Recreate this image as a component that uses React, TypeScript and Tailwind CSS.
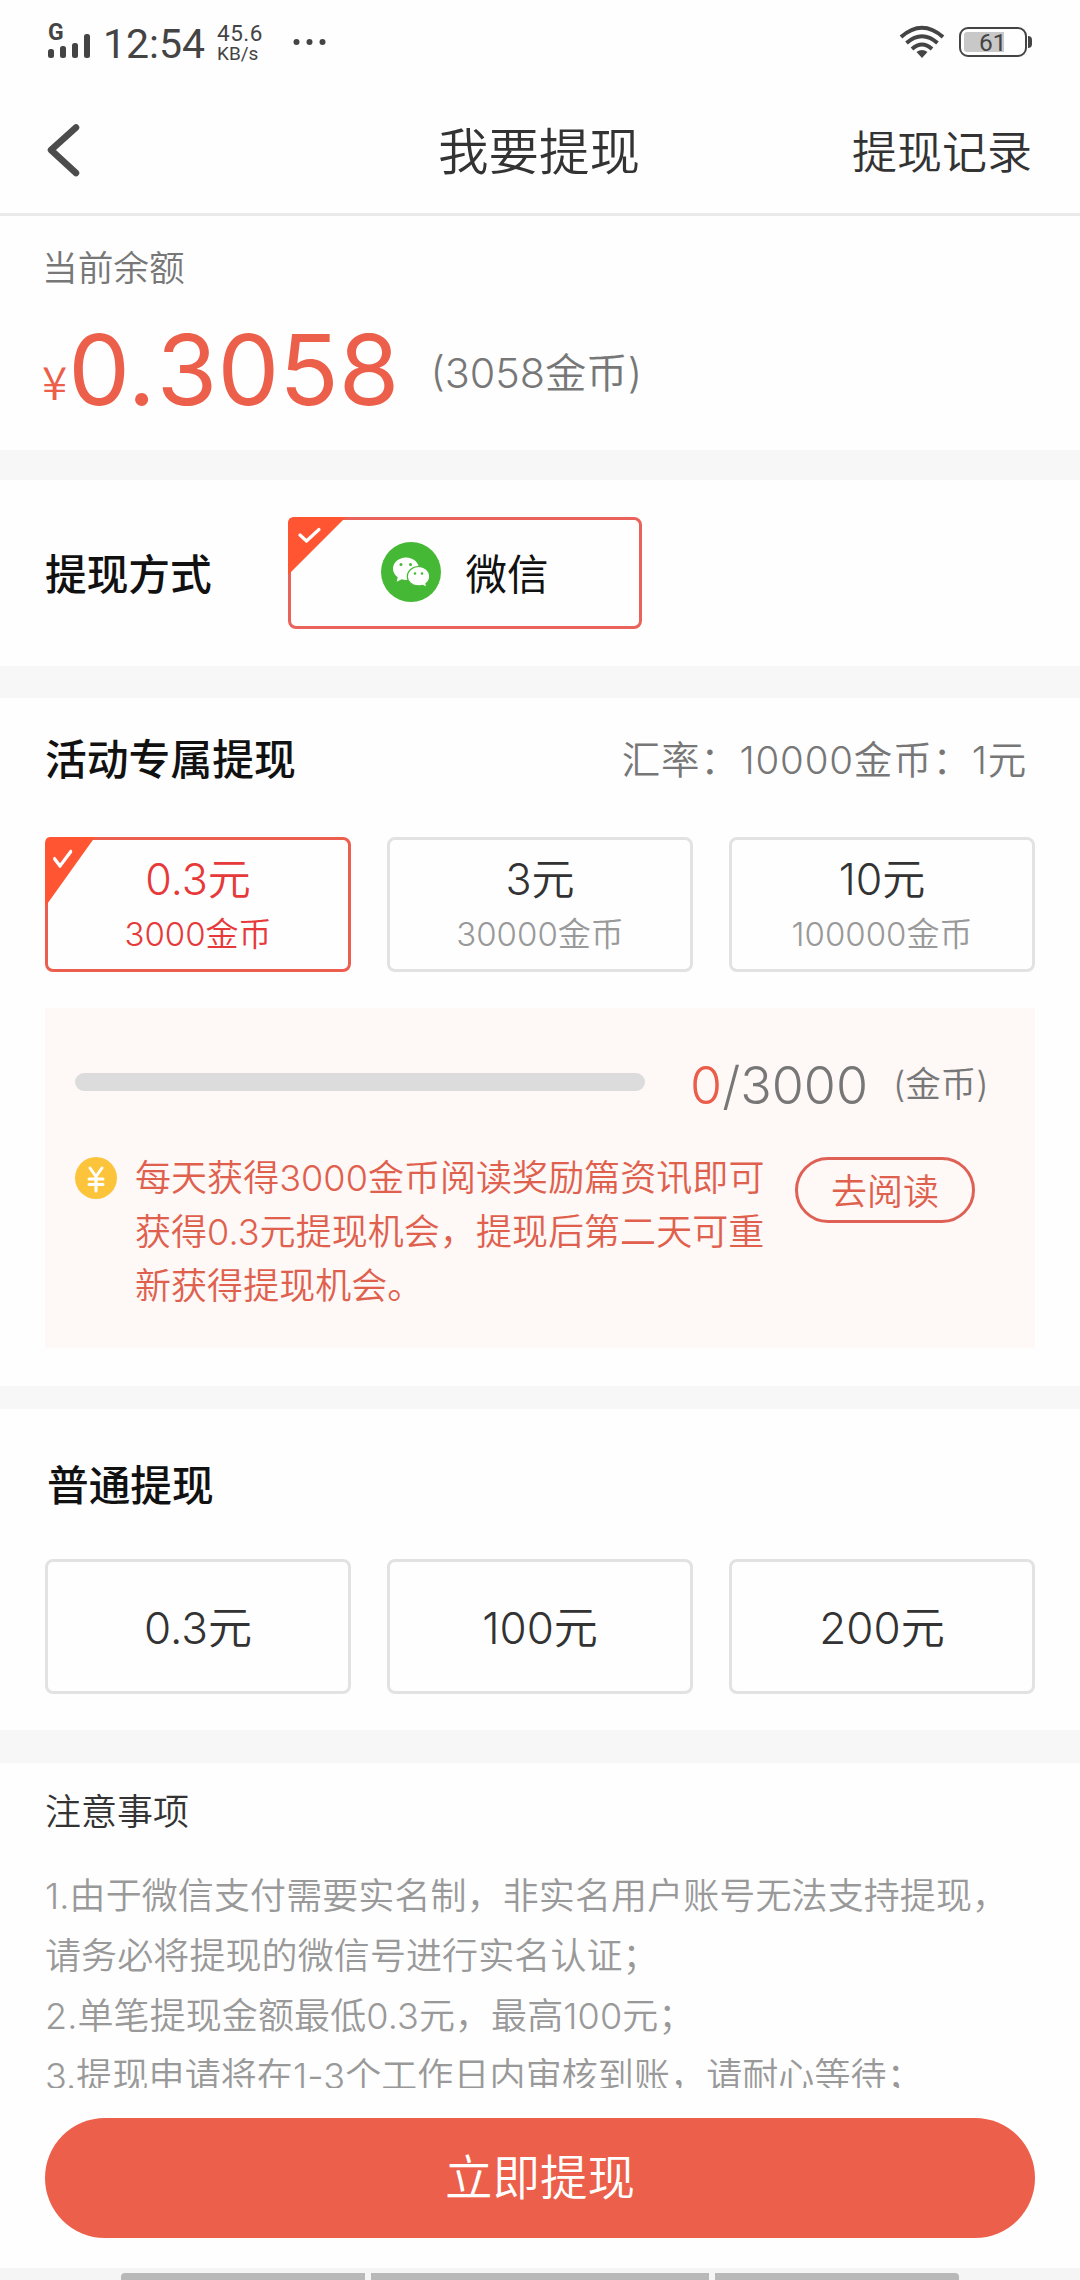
import { clsx } from "clsx";

interface Amount {
  label: string;
  coins?: string;
}

const activityAmounts: Amount[] = [
  { label: "0.3元", coins: "3000金币" },
  { label: "3元", coins: "30000金币" },
  { label: "10元", coins: "100000金币" },
];

const normalAmounts: Amount[] = [{ label: "0.3元" }, { label: "100元" }, { label: "200元" }];

const taskLines = ["每天获得3000金币阅读奖励篇资讯即可", "获得0.3元提现机会，提现后第二天可重", "新获得提现机会。"];

const notes = [
  "1.由于微信支付需要实名制，非实名用户账号无法支持提现，",
  "请务必将提现的微信号进行实名认证；",
  "2.单笔提现金额最低0.3元，最高100元；",
  "3.提现申请将在1-3个工作日内审核到账，请耐心等待；",
];

function StatusBar() {
  return (
    <div className="flex h-[84px] items-start pl-12 pr-12 text-[#444]">
      <div className="mt-[22px] flex w-[46px] flex-col">
        <span className="h-[19px] font-['Roboto'] text-[23px] leading-[21px] font-bold">G</span>
        <svg className="-mt-[8px]" width="44" height="26" viewBox="0 0 44 26" fill="currentColor">
          <rect x="0" y="16" width="6" height="9" rx="2.5" />
          <rect x="12" y="13" width="6" height="12" rx="2.5" />
          <rect x="24" y="10" width="6" height="15" rx="2.5" />
          <rect x="36" y="1" width="6" height="24" rx="2.5" />
        </svg>
      </div>
      <span className="mt-[24px] ml-[9px] w-[112px] font-['Roboto'] text-[41px] leading-[41px]">12:54</span>
      <div className="mt-[22px] ml-[2px] flex w-[74px] flex-col font-['Roboto']">
        <span className="text-[22.5px] leading-[22px] tracking-[0.5px]">45.6</span>
        <span className="text-[19px] leading-[20px]">KB/s</span>
      </div>
      <svg className="mt-[38px] ml-[2px]" width="34" height="8" viewBox="0 0 34 8" fill="currentColor">
        <circle cx="3.5" cy="4" r="3" />
        <circle cx="16.5" cy="4" r="3" />
        <circle cx="29.5" cy="4" r="3" />
      </svg>
      <svg className="mt-[25px] ml-auto" width="46" height="34" viewBox="0 0 46 34" fill="none" stroke="currentColor" strokeWidth="4">
        <path d="M2 12 Q23 -6.500 44 12" />
        <path d="M7.500 18 Q23 4.500 38.500 18" />
        <path d="M13 24 Q23 15 33 24" />
        <path d="M17.500 27 Q23 23 28.500 27 L23 33 Z" fill="currentColor" stroke="none" />
      </svg>
      <div className="mt-[27px] ml-[14px] flex items-center">
        <div className="flex h-[30px] w-[68px] items-center rounded-[9px] border-2 border-[#444] pl-[3px]">
          <div className="h-5 w-[40px] rounded-l-[3px] bg-[#c8c8c8] pl-[15px] font-['Roboto'] text-[24.5px] leading-[22px]">61</div>
        </div>
        <div className="ml-px h-3 w-[4px] rounded-r-full bg-[#444]" />
      </div>
    </div>
  );
}

function Header() {
  return (
    <div className="grid h-[132px] grid-cols-3 items-center border-b-[3px] border-[#eaeaea] pr-[48px] pl-[46px] text-[#333]">
      <svg className="mt-[2px]" width="36" height="54" viewBox="0 0 36 54" fill="none" stroke="#4c4c4c" strokeWidth="6.5" strokeLinecap="round" strokeLinejoin="round">
        <path d="M30 4.500 L5 27 L30 50" />
      </svg>
      <h1 className="mt-[6px] text-center text-[50.5px] font-[350] leading-[56px]">我要提现</h1>
      <span className="mt-[8px] text-right text-[45px] font-[350] leading-[56px]">提现记录</span>
    </div>
  );
}

function WechatIcon() {
  return (
    <svg className="mt-[-3px]" width="60" height="60" viewBox="0 0 60 60">
      <circle cx="30" cy="30" r="30" fill="#45b935" />
      <path d="M25 15.500c-7.300 0-13 5-13 11.200 0 3.500 1.900 6.500 4.700 8.500l-1 4.500 5-2.500c1.400.4 2.800.7 4.300.7 7.300 0 13-5 13-11.200s-5.700-11.200-13-11.200z" fill="#fff" />
      <path d="M37.500 24.500c6.200 0 11.200 4.400 11.200 9.900 0 3-1.500 5.500-3.800 7.300l1 3.700-4.300-2.100c-1.300.4-2.700.6-4.100.6-6.200 0-11.200-4.200-11.200-9.500s5-9.900 11.200-9.900z" fill="#fff" stroke="#45b935" strokeWidth="1.200" />
      <g fill="#45b935">
        <circle cx="20" cy="22.500" r="1.500" />
        <circle cx="29.500" cy="22.500" r="1.500" />
        <circle cx="34" cy="31.500" r="1.300" />
        <circle cx="41" cy="31.500" r="1.300" />
      </g>
    </svg>
  );
}

function CheckCorner({ tall }: { tall?: boolean }) {
  return (
    <svg
      className={clsx("absolute -top-[3px] -left-[3px]", tall ? "h-[70px] w-[50px]" : "h-[58px] w-[58px]")}
      viewBox="0 0 58 58"
      preserveAspectRatio="none"
    >
      <path d="M0 6 Q0 0 6 0 H58 L0 58 Z" fill="#ff5533" />
      <path d={tall ? "M11 18 L17.500 24 L30 12" : "M12 18 L18.500 24 L31 12.500"} fill="none" stroke="#fff" strokeWidth="3.200" strokeLinecap="round" strokeLinejoin="round" />
    </svg>
  );
}

function AmountGrid({ amounts, selected }: { amounts: Amount[]; selected?: number }) {
  return (
    <div className="grid grid-cols-3 gap-[36px]">
      {amounts.map((amount, i) => (
        <button
          key={amount.label}
          className={clsx(
            "relative flex h-[135px] flex-col items-center justify-center rounded-[8px] border-[3px] pt-[3px]",
            i === selected ? "border-[#ec5f4f] text-[#e63a3a]" : "border-[#e2e2e2] text-[#333]"
          )}
        >
          {i === selected && <CheckCorner tall />}
          <span className={clsx("font-[350] leading-[56px]", amount.coins ? "text-[43px]" : "text-[44px]")}>{amount.label}</span>
          {amount.coins && (
            <span className={clsx("text-[33px] font-[350] leading-[54px]", i !== selected && "text-[#999]")}>{amount.coins}</span>
          )}
        </button>
      ))}
    </div>
  );
}

function TaskPanel() {
  return (
    <div className="mt-[36px] h-[340px] bg-[#fef8f6] pt-[46px] pl-[30px]">
      <div className="flex h-[60px] items-center">
        <div className="-mt-[5px] h-[18px] w-[570px] rounded-full bg-[#dcdcdc]" />
        <div className="mt-[4px] ml-[45px] w-[203px] text-[52px] font-[350] text-[#777]">
          <span className="text-[#ea5d4b]">0</span>/3000
        </div>
        <span className="mt-[2px] text-[35.5px] font-[350] text-[#777]">(金币)</span>
      </div>
      <div className="mt-[43px] flex items-start text-[36px] font-[350] text-[#e0604e]">
        <svg width="42" height="42" viewBox="0 0 42 42" fill="none">
          <circle cx="21" cy="21" r="21" fill="#fcc43a" />
          <path d="M15 11 L21 19.500 L27 11 M21 19.500 V34 M14 22 H28 M14 27.500 H28" stroke="#fff" strokeWidth="3" strokeLinecap="round" />
        </svg>
        <div className="-mt-[6px] ml-[18px] w-[660px] leading-[54px] tracking-[0.05px]">
          {taskLines.map((line) => (
            <p key={line} className="whitespace-nowrap">{line}</p>
          ))}
        </div>
        <button className="flex h-[66px] w-[180px] items-center justify-center rounded-full border-[3px] border-[#df6156] pt-[3px]">去阅读</button>
      </div>
    </div>
  );
}

export default function App() {
  return (
    <div className="flex h-[2280px] w-[1080px] flex-col overflow-hidden bg-[#fefefe] font-['Inter','Noto_Sans_CJK_SC',sans-serif]">
      <StatusBar />
      <Header />

      <section className="h-[234px] px-[42px] pt-[26px]">
        <p className="text-[35.7px] font-[350] leading-[52px] text-[#777]">当前余额</p>
        <div className="mt-[24px] flex h-[104px] items-baseline leading-[104px]">
          <span className="relative -top-[5px] font-['Noto_Sans_CJK_SC'] text-[46px] font-[350] text-[#ec5f4a]">¥</span>
          <span className="ml-[1px] text-[98px] text-[#ec5f4a]">
            0<span className="mr-[1px]">.</span>3058
          </span>
          <span className="relative -top-[17px] ml-[31px] text-[41.3px] font-[350] text-[#777]">(3058金币)</span>
        </div>
      </section>
      <div className="h-[30px] bg-[#f7f7f7]" />

      <section className="flex h-[186px] items-center px-[45px]">
        <h2 className="mt-[4px] w-[243px] text-[41.7px] font-medium text-[#111]">提现方式</h2>
        <button className="relative flex h-[112px] w-[354px] items-center justify-center rounded-[8px] border-[3px] border-[#e9635a]">
          <CheckCorner />
          <WechatIcon />
          <span className="mt-[4px] ml-[24px] text-[41.5px] text-[#111]">微信</span>
        </button>
      </section>
      <div className="h-[32px] bg-[#f7f7f7]" />

      <section className="h-[688px] px-[45px] pt-[32px]">
        <div className="mb-[47px] flex h-[60px] items-center justify-between pr-[8px]">
          <h2 className="text-[41.8px] font-medium text-[#111]">活动专属提现</h2>
          <span className="mt-[2px] text-[38.5px] font-[350] tracking-[0.8px] text-[#777]">汇率：10000金币：1元</span>
        </div>
        <AmountGrid amounts={activityAmounts} selected={0} />
        <TaskPanel />
      </section>
      <div className="h-[23px] bg-[#f7f7f7]" />

      <section className="h-[321px] px-[45px] pt-[47px]">
        <h2 className="mb-[43px] ml-[2px] text-[41.7px] font-medium leading-[60px] text-[#111]">普通提现</h2>
        <AmountGrid amounts={normalAmounts} />
      </section>
      <div className="h-[33px] shrink-0 bg-[#f7f7f7]" />

      <section className="h-[325px] overflow-hidden px-[45px] pt-[19px]">
        <h3 className="text-[36px] font-[350] leading-[60px] text-[#333]">注意事项</h3>
        <div className="mt-[24px] text-[36px] font-[350] leading-[60px] tracking-[0.1px] text-[#999]">
          {notes.map((note) => (
            <p key={note} className="whitespace-nowrap">{note}</p>
          ))}
        </div>
      </section>

      <div className="h-[180px] px-[45px] pt-[30px]">
        <button className="flex h-[120px] w-full items-center justify-center rounded-full bg-[#ec5f4a] text-[47.5px] font-[350] text-white">立即提现</button>
      </div>
      <div className="flex h-[12px] gap-[6px] bg-[#f5f5f5] pt-[5px] pl-[121px]">
        <div className="w-[244px] rounded-tl-[4px] bg-[#b9b9b9]" />
        <div className="w-[338px] bg-[#b9b9b9]" />
        <div className="w-[244px] rounded-tr-[4px] bg-[#b9b9b9]" />
      </div>
    </div>
  );
}
